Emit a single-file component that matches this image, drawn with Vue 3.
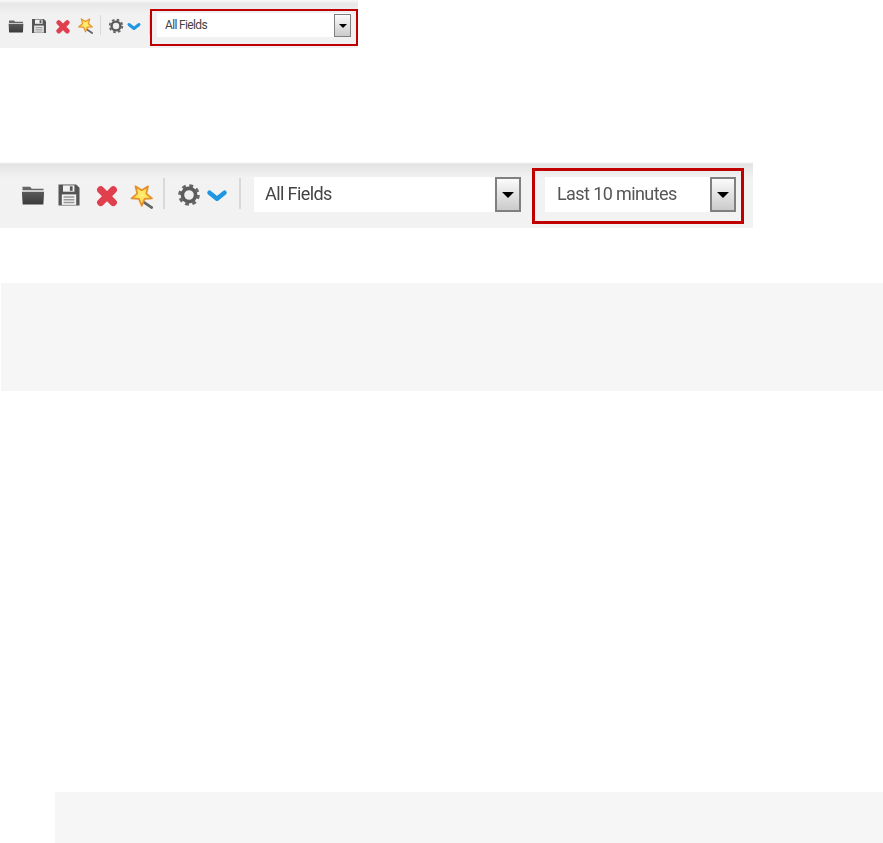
<script setup>
const icons = ["folder", "save", "remove", "star", "sep", "gear", "chevron", "sep"];
</script>

<template>
    <div class="page">
        <svg class="defs" width="0" height="0">
            <defs>
                <linearGradient id="dark" x1="0" y1="0" x2="0" y2="1">
                    <stop offset="0" stop-color="#5a5a5a" />
                    <stop offset="1" stop-color="#3a3a3a" />
                </linearGradient>
                <radialGradient id="gold" cx="0.5" cy="0.45" r="0.6">
                    <stop offset="0" stop-color="#fff27a" />
                    <stop offset="1" stop-color="#fcc92e" />
                </radialGradient>
            </defs>
            <symbol id="folder" viewBox="0 0 16 16">
                <path d="M1 2.5h5l1.2 1.3H15v1.1H1z" fill="#666" />
                <path d="M.6 5.8h14.8l-.5 8.6H1.1z" fill="url(#dark)" />
            </symbol>
            <symbol id="save" viewBox="0 0 16 16">
                <path d="M1 1h11.8L15 3.2V15H1z" fill="#555" />
                <rect x="4" y="1.6" width="7.6" height="4.2" fill="#f1f1f1" />
                <rect x="8.6" y="2.2" width="1.8" height="3" fill="#555" />
                <rect x="3.2" y="7.6" width="9.6" height="7" fill="#f1f1f1" />
                <path d="M4.4 9.4h7.2M4.4 11.2h7.2M4.4 13h7.2" stroke="#999" stroke-width="1" />
            </symbol>
            <symbol id="remove" viewBox="0 0 16 16">
                <path d="M3.8 4.6l8.4 8.4M12.2 4.6l-8.4 8.4" stroke="#e0404e" stroke-width="4.8" stroke-linecap="round" />
            </symbol>
            <symbol id="star" viewBox="0 0 16 16">
                <path d="M9.3 11.1l6.5 4.4" stroke="#666" stroke-width="1.8" />
                <path d="M4.27.88L8.5 3.5 12.73.88 11.54 5.71 15.35 8.92 10.38 9.29 8.5 13.9 6.62 9.29 1.65 8.92 5.46 5.71z" fill="url(#gold)" stroke="#e5902a" stroke-width="1.1" stroke-linejoin="round" />
            </symbol>
            <symbol id="gear" viewBox="0 0 16 16">
                <circle cx="8" cy="8" r="6.3" fill="none" stroke="#666" stroke-width="1.8" stroke-dasharray="2.6 2.35" />
                <circle cx="8" cy="8" r="4.4" fill="#efefef" stroke="#5c5c5c" stroke-width="2.4" />
            </symbol>
            <symbol id="chevron" viewBox="0 0 16 16">
                <path d="M3 6.5l5 4 5-4" fill="none" stroke="#1f96e2" stroke-width="3" stroke-linecap="round" stroke-linejoin="round" />
            </symbol>
        </svg>

        <div class="bar bar-small">
            <template v-for="(name, i) in icons" :key="i">
                <span v-if="name === 'sep'" class="sep"></span>
                <svg v-else class="icon" :class="name"><use :href="'#' + name" /></svg>
            </template>
            <div class="picker-box">
                <div class="picker">
                    <span class="label">All Fields</span>
                    <span class="arrow"></span>
                </div>
            </div>
        </div>

        <div class="bar bar-large">
            <template v-for="(name, i) in icons" :key="i">
                <span v-if="name === 'sep'" class="sep"></span>
                <svg v-else class="icon" :class="name"><use :href="'#' + name" /></svg>
            </template>
            <div class="picker fields">
                <span class="label">All Fields</span>
                <span class="arrow"></span>
            </div>
            <div class="picker-box">
                <div class="picker">
                    <span class="label minutes">Last 10 minutes</span>
                    <span class="arrow"></span>
                </div>
            </div>
        </div>

        <div class="panel panel-top"></div>
        <div class="panel panel-bottom"></div>
    </div>
</template>

<style scoped>
.page {
    width: 883px;
    height: 843px;
    overflow: hidden;
    background: #fff;
    font-family: Roboto, "Liberation Sans", sans-serif;
}

.defs {
    position: absolute;
}

.bar {
    display: flex;
    align-items: flex-start;
    background: #f1f1f1;
}

.icon {
    display: block;
    flex: none;
}

.sep {
    flex: none;
    background: #d9d9d9;
}

.label {
    flex: 1;
    color: #444;
    white-space: nowrap;
}

.picker {
    display: flex;
    background: #fff;
}

.arrow {
    flex: none;
    display: flex;
    align-items: center;
    justify-content: center;
    box-sizing: border-box;
    border: 1px solid #808080;
    background: linear-gradient(#fbfbfb, #cbcbcb);
}

.arrow::after {
    content: "";
    border-style: solid;
    border-color: #000 transparent transparent;
}

/* small bar */
.bar-small {
    width: 358px;
    height: 48px;
    background: linear-gradient(#f8f8f8, #e8e8e8 4px, #f1f1f1 14px);
}

.bar-small .icon {
    width: 16px;
    height: 16px;
    margin-top: 18px;
}

.bar-small .folder {
    margin-left: 8px;
}

.bar-small .save {
    margin-left: 7px;
}

.bar-small .remove {
    margin-left: 8px;
}

.bar-small .star {
    margin-left: 6px;
}

.bar-small .sep {
    width: 1px;
    height: 20px;
    margin: 15px 0 0 7px;
}

.bar-small .gear {
    margin-left: 7px;
}

.bar-small .chevron {
    margin-left: 2px;
}

.bar-small .chevron + .sep {
    margin-left: 7px;
}

.bar-small .picker-box {
    box-sizing: border-box;
    width: 208px;
    height: 37px;
    margin-top: 9px;
    padding: 2px 5px 0;
    border: 2px solid #c00000;
}

.bar-small .picker {
    height: 24px;
}

.bar-small .label {
    padding: 5px 0 0 8px;
    font-size: 12px;
    letter-spacing: -0.65px;
}

.bar-small .arrow {
    width: 17px;
    height: 23px;
    margin-top: 1px;
}

.bar-small .arrow::after {
    border-width: 4px 4px 0;
}

/* large bar */
.bar-large {
    width: 753px;
    height: 66px;
    margin-top: 114px;
    background: linear-gradient(#fff, #e4e4e4 2px, #f2f2f2 16px);
    filter: blur(0.5px);
}

.bar-large .icon {
    width: 24px;
    height: 24px;
    margin-top: 21px;
}

.bar-large .folder {
    margin-left: 21px;
}

.bar-large .save {
    margin-left: 12px;
}

.bar-large .remove {
    margin-left: 14px;
}

.bar-large .star {
    margin: 23px 0 0 10px;
}

.bar-large .sep {
    width: 2px;
    height: 31px;
    margin: 16px 0 0 10px;
}

.bar-large .gear {
    margin-left: 12px;
}

.bar-large .chevron {
    margin-left: 4px;
}

.bar-large .chevron + .sep {
    margin-left: 10px;
}

.bar-large .picker {
    height: 35px;
    margin-top: 15px;
}

.bar-large .fields {
    width: 267px;
    margin-left: 13px;
}

.bar-large .picker-box {
    box-sizing: border-box;
    width: 212px;
    height: 56px;
    margin: 6px 0 0 11px;
    padding: 6px 5px 0 10px;
    border: 3px solid #c00000;
}

.bar-large .picker-box .picker {
    margin-top: 0;
}

.bar-large .label {
    padding: 6px 0 0 11px;
    font-size: 18px;
    letter-spacing: -0.6px;
}

.bar-large .minutes {
    padding-left: 12px;
    color: #555;
}

.bar-large .arrow {
    width: 26px;
    height: 35px;
    border-width: 2px;
}

.bar-large .arrow::after {
    border-width: 6px 6px 0;
}

/* empty grey panels */
.panel {
    background: #f6f6f6;
}

.panel-top {
    height: 108px;
    margin: 55px 0 0 1px;
}

.panel-bottom {
    height: 51px;
    margin: 401px 0 0 55px;
}
</style>
